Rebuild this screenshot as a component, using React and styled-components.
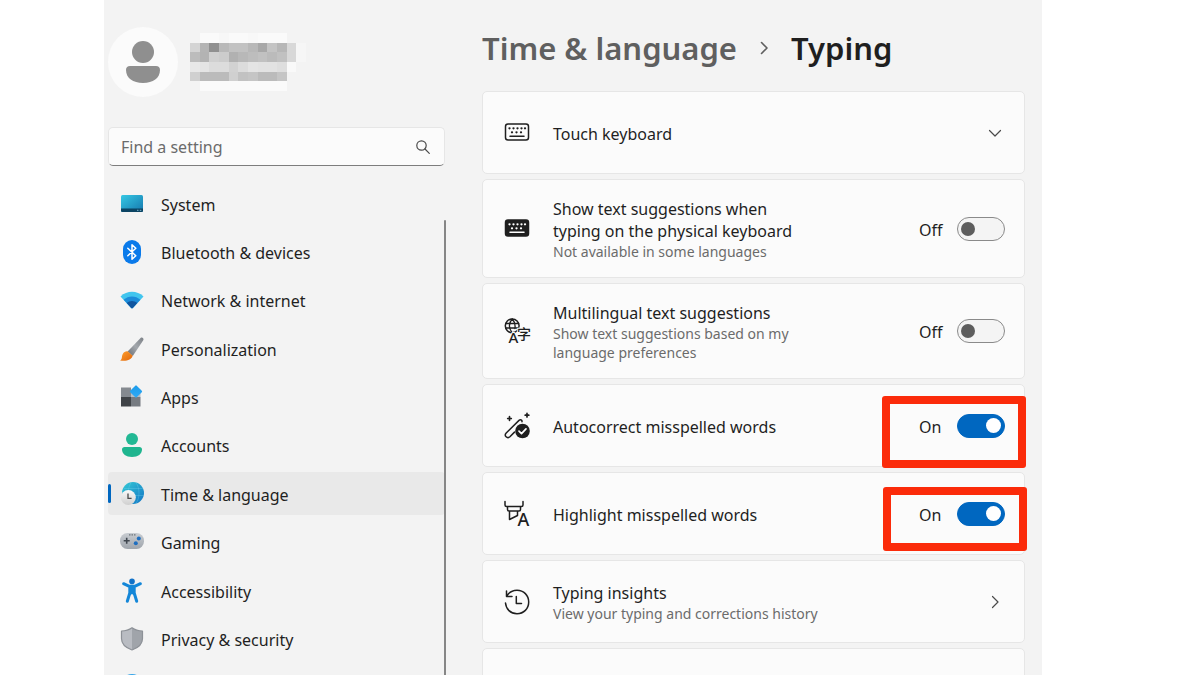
import React, { useState } from 'react';
import styled, { createGlobalStyle, css } from 'styled-components';

const colors = {
  window: '#f3f3f3',
  card: '#fbfbfb',
  line: '#e6e6e6',
  text: '#1f1f1f',
  muted: '#6b6b6b',
  accent: '#0067c0',
  mark: '#fb2b0a',
};

const GlobalStyle = createGlobalStyle`
  *, *::before, *::after {
    box-sizing: border-box;
  }
  body {
    margin: 0;
    background: #ffffff;
    color: ${colors.text};
    font-family: "Noto Sans", "Open Sans", "Noto Sans CJK SC", sans-serif;
    font-size: 16px;
    line-height: 22px;
  }
`;

const Window = styled.div`
  display: grid;
  grid-template-columns: 337px minmax(0, 1fr);
  column-gap: 37px;
  height: 100vh;
  margin: 0 158px 0 104px;
  padding: 0 17px 0 4px;
  overflow: hidden;
  background: ${colors.window};
`;

const Sidebar = styled.aside`
  padding-top: 27px;
`;

const Profile = styled.div`
  display: flex;
  align-items: center;
  gap: 12px;
  height: 70px;
`;

const Avatar = styled.div`
  display: flex;
  align-items: center;
  justify-content: center;
  width: 70px;
  height: 70px;
  border-radius: 50%;
  background: ${colors.card};
`;

const Search = styled.label`
  display: flex;
  align-items: center;
  height: 39px;
  margin: 30px 0 16px;
  padding: 0 13px 0 12px;
  border: 1px solid ${colors.line};
  border-bottom-color: #7d7d7d;
  border-radius: 5px;
  background: ${colors.card};
`;

const SearchInput = styled.input`
  flex: 1;
  min-width: 0;
  padding: 0;
  border: 0;
  outline: 0;
  background: transparent;
  color: ${colors.text};
  font: inherit;
  &::placeholder {
    color: ${colors.muted};
    opacity: 1;
  }
`;

const Nav = styled.nav`
  position: relative;
  display: flex;
  flex-direction: column;
  justify-content: space-between;
  height: calc(100vh - 148px);
`;

const NavItem = styled.a`
  display: flex;
  align-items: center;
  gap: 17px;
  height: 43px;
  padding-left: 12px;
  border-radius: 4px;
  color: ${colors.text};
  text-decoration: none;
  svg {
    flex: none;
    overflow: visible;
  }
  ${(props) => props.$active && css`
    padding-left: 0;
    background: #e9e9e9;
    &::before {
      content: "";
      width: 3px;
      height: 19px;
      margin-right: -8px;
      border-radius: 2px;
      background: ${colors.accent};
    }
  `}
`;

const NavText = styled.span`
  padding-top: 2px;
`;

const ScrollThumb = styled.div`
  position: absolute;
  top: 38px;
  right: -1px;
  bottom: 0;
  width: 2px;
  border-radius: 1px;
  background: #868686;
`;

const Main = styled.main`
  padding-top: 26px;
`;

const Breadcrumb = styled.header`
  display: flex;
  align-items: center;
  gap: 20px;
  height: 44px;
  margin-bottom: 21px;
  font-size: 31px;
  line-height: 44px;
  font-weight: 600;
`;

const Parent = styled.a`
  color: #5f5f5f;
  text-decoration: none;
`;

const Title = styled.h1`
  margin: 0;
  font: inherit;
`;

const Cards = styled.div`
  display: flex;
  flex-direction: column;
  gap: 5px;
`;

const Card = styled.section`
  position: relative;
  display: flex;
  align-items: center;
  gap: 23px;
  width: 100%;
  min-height: 83px;
  padding: 16px 19px 16px 21px;
  border: 1px solid ${colors.line};
  border-radius: 5px;
  background: ${colors.card};
  color: ${colors.text};
  font: inherit;
  text-align: left;
  text-decoration: none;
  svg {
    flex: none;
    overflow: visible;
  }
`;

const Texts = styled.div`
  flex: 1;
  min-width: 0;
  padding-top: 2px;
`;

const Label = styled.label`
  display: block;
  max-width: 260px;
`;

const Hint = styled.div`
  max-width: 270px;
  color: ${colors.muted};
  font-size: 14px;
  line-height: 19px;
`;

const State = styled.span`
  width: 38px;
  margin-right: -23px;
  padding-top: 2px;
`;

const Switch = styled.input`
  appearance: none;
  display: flex;
  align-items: center;
  width: 48px;
  height: 24px;
  margin: 0;
  padding: 0 3px;
  border: 1px solid #8a8a8a;
  border-radius: 12px;
  background: #f4f4f4;
  &::before {
    content: "";
    width: 14px;
    height: 14px;
    border-radius: 50%;
    background: #5d5d5d;
  }
  &:checked {
    justify-content: flex-end;
    border-color: ${colors.accent};
    background: ${colors.accent};
  }
  &:checked::before {
    width: 15px;
    height: 15px;
    background: #ffffff;
  }
`;

const Mark = styled.div`
  position: absolute;
  top: ${(props) => props.$top}px;
  right: ${(props) => props.$right}px;
  width: 144px;
  height: ${(props) => props.$height}px;
  border: 8px solid ${colors.mark};
  border-radius: 3px;
  pointer-events: none;
`;

const ChevronSlot = styled.span`
  display: flex;
  justify-content: center;
  width: 20px;
`;

// grey levels of the mosaic over the account name, one row per line
const mosaic = [
  ['', 'fa', 'fa', 'f7', 'fa', 'fa', 'f8', 'fa', 'fa', 'fa', ''],
  ['d4', 'b4', '90', 'b9', 'c2', 'c2', 'b8', 'a8', 'c4', 'b7', 'd8'],
  ['bc', 'b3', 'd0', 'cc', 'b1', 'b8', 'bd', 'c1', 'bb', 'c1', 'd8'],
  ['e8', 'e4', 'dc', 'dc', 'd2', 'dc', 'e4', 'e2', 'e2', 'de', 'f9'],
  ['d0', 'bb', 'bb', 'bb', 'd0', 'c2', 'c5', 'bb', 'bb', 'c5', ''],
  ['', 'fa', 'fa', 'fa', 'fa', 'fa', 'fa', 'fa', 'fa', 'fa', ''],
];

const HiddenName = () => (
  <svg width="116" height="58" viewBox="0 0 12 6" preserveAspectRatio="none" shapeRendering="crispEdges" aria-hidden="true">
    {mosaic.map((row, y) => row.map((v, x) => v && (
      <rect key={`${x}-${y}`} x={x} y={y} width="1" height="1" fill={`#${v}${v}${v}`} />
    )))}
    <rect x="11" y="1" width="1" height="2" fill="#f6f6f6" />
  </svg>
);

const PersonIcon = () => (
  <svg width="36" height="44" viewBox="0 0 36 44" fill="#8f8f8f" aria-hidden="true">
    <circle cx="18" cy="12" r="11" />
    <path d="M5 26h26c2.500 0 4 1.500 4 4 0 8-7 13-17 13S1 38 1 30c0-2.500 1.500-4 4-4z" />
  </svg>
);

const SearchIcon = () => (
  <svg width="16" height="16" viewBox="0 0 16 16" fill="none" stroke="#4a4a4a" strokeWidth="1.200" strokeLinecap="round" aria-hidden="true">
    <circle cx="6.500" cy="6.500" r="4.700" />
    <path d="M10 10l4.300 4.300" />
  </svg>
);

const Chevron = ({ down, color = '#4a4a4a', weight = 1.2 }) => (
  <svg width="14" height="14" viewBox="0 0 14 14" fill="none" stroke={color} strokeWidth={weight} strokeLinecap="round" strokeLinejoin="round" aria-hidden="true">
    <path d={down ? 'M1.500 4.500l5.500 5.500 5.500-5.500' : 'M4.500 1.500l5.500 5.500-5.500 5.500'} />
  </svg>
);

const NavSvg = ({ children }) => (
  <svg width="24" height="24" viewBox="0 0 24 24" fill="none" aria-hidden="true">{children}</svg>
);

const SystemIcon = () => (
  <NavSvg>
    <defs>
      <linearGradient id="sys" x1="0" y1="0" x2="1" y2="1">
        <stop offset="0" stopColor="#35c8e4" />
        <stop offset="1" stopColor="#1577ad" />
      </linearGradient>
    </defs>
    <rect x="1" y="3" width="22" height="17" rx="1.500" fill="url(#sys)" />
    <path d="M1 16.500h22v2a1.500 1.500 0 0 1-1.500 1.500h-19A1.500 1.500 0 0 1 1 18.500z" fill="#0b4463" />
    <path d="M17 18.300h1.500M19.800 18.300h1.500" stroke="#7fb6cf" />
  </NavSvg>
);

const BluetoothIcon = () => (
  <NavSvg>
    <rect x="3" y="0" width="18" height="24" rx="9" fill="#0a7aea" />
    <path d="M7.800 8.300l8 7.400-3.800 3.600V4.700l3.800 3.600-8 7.400" stroke="#fff" strokeWidth="1.500" strokeLinejoin="round" strokeLinecap="round" />
  </NavSvg>
);

const NetworkIcon = () => (
  <NavSvg>
    <path d="M0.500 8.500C7 2.300 17 2.300 23.500 8.500L13 19.700q-1 1-2 0z" fill="#41c5ee" />
    <path d="M3.600 11.800C8.400 7.300 15.600 7.300 20.400 11.800L13 19.700q-1 1-2 0z" fill="#1c8bd9" />
    <path d="M6.700 15.100c3-2.800 7.600-2.800 10.600 0L13 19.700q-1 1-2 0z" fill="#0f559f" />
  </NavSvg>
);

const BrushIcon = () => (
  <NavSvg>
    <defs>
      <linearGradient id="handle" x1="1" y1="0" x2="0" y2="1">
        <stop offset="0" stopColor="#7c8187" />
        <stop offset="0.500" stopColor="#a4a8ad" />
        <stop offset="1" stopColor="#666b72" />
      </linearGradient>
      <linearGradient id="bristle" x1="0" y1="0" x2="1" y2="1">
        <stop offset="0" stopColor="#ffa02e" />
        <stop offset="1" stopColor="#e0660c" />
      </linearGradient>
    </defs>
    <path d="M20.800 0.800c1.200-.9 3.200.4 2.600 2.100L12.800 19 7.600 14.500z" fill="url(#handle)" />
    <path d="M7.600 14.300l5 4.500c-1 4.400-6.400 5.600-12.600 4.700 2.800-1.600 1.200-3.600 2.800-6.600 1-1.900 3-2.900 4.800-2.600z" fill="url(#bristle)" />
  </NavSvg>
);

const AppsIcon = () => (
  <NavSvg>
    <defs>
      <linearGradient id="tile" x1="0" y1="0" x2="1" y2="1">
        <stop offset="0" stopColor="#1c9bea" />
        <stop offset="1" stopColor="#2faaf5" />
      </linearGradient>
    </defs>
    <rect x="1" y="2.500" width="10" height="9.500" fill="#858a90" />
    <rect x="1" y="12" width="10" height="9.500" fill="#3f4347" />
    <rect x="11" y="12" width="9.500" height="9.500" fill="#767b81" />
    <path d="M11 8h9.500v4H11z" fill="#b9bec4" />
    <rect x="11.400" y="1.900" width="9.200" height="9.200" rx="1" transform="rotate(45 16 6.500)" fill="url(#tile)" />
  </NavSvg>
);

const AccountsIcon = () => (
  <NavSvg>
    <circle cx="12" cy="6" r="6" fill="#22b894" />
    <path d="M4.500 14h15c1.500 0 2.500 1 2.500 2.500 0 4.500-4 7.500-10 7.500S2 21 2 16.500C2 15 3 14 4.500 14z" fill="#1fb58f" />
  </NavSvg>
);

const TimeIcon = () => (
  <NavSvg>
    <defs>
      <linearGradient id="globe" x1="0" y1="0" x2="1" y2="1">
        <stop offset="0" stopColor="#35cbd6" />
        <stop offset="1" stopColor="#1273c4" />
      </linearGradient>
      <linearGradient id="clock" x1="0" y1="0" x2="0" y2="1">
        <stop offset="0" stopColor="#fafafa" />
        <stop offset="1" stopColor="#cfcfcf" />
      </linearGradient>
    </defs>
    <circle cx="13" cy="11" r="11" fill="url(#globe)" />
    <path d="M4 6.500h19M8 13.500h16M16 0.500c4 6 4 15 0 21M11 0.500C9 4 8.500 7 8.500 9" stroke="#7fdcf0" strokeWidth="0.700" opacity="0.400" />
    <circle cx="8.300" cy="15.500" r="7.500" fill="url(#clock)" />
    <path d="M8 11.500v4.800h3.600" stroke="#4a4a4a" strokeWidth="1.300" />
  </NavSvg>
);

const GamingIcon = () => (
  <NavSvg>
    <defs>
      <linearGradient id="pad" x1="0" y1="0" x2="0" y2="1">
        <stop offset="0" stopColor="#c8ccd1" />
        <stop offset="1" stopColor="#9fa5ac" />
      </linearGradient>
    </defs>
    <rect x="0" y="3" width="24" height="16" rx="7.500" fill="url(#pad)" />
    <path d="M6.700 7.700v6M3.700 10.700h6" stroke="#3f464e" strokeWidth="1.600" />
    <path d="M9 4.800h1.500M11.500 4.800H13M14 4.800h1.500" stroke="#6d747b" strokeWidth="1.200" />
    <circle cx="18.800" cy="8.600" r="2" fill="#1f6fc0" />
    <circle cx="15.800" cy="13.200" r="2" fill="#1f6fc0" />
  </NavSvg>
);

const AccessibilityIcon = () => (
  <NavSvg>
    <circle cx="12" cy="2.400" r="2.800" fill="#1172c8" />
    <path d="M3.600 4.700L8.800 7.200h6.400l5.200-2.500M9.800 7.500V14L7.300 22.300M14.200 7.500V14l2.500 8.300" stroke="#1487d8" strokeWidth="3" strokeLinecap="round" strokeLinejoin="round" />
    <path d="M9 6.500h6v10.500L12 15l-3 2z" fill="#1487d8" />
  </NavSvg>
);

const ShieldIcon = () => (
  <NavSvg>
    <path d="M12 0.800C9 3 5 4 1.500 4v7.500C1.500 17 5 20.500 12 23z" fill="#b9bcc2" />
    <path d="M12 0.800c3 2.200 7 3.200 10.500 3.200v7.500C22.500 17 19 20.500 12 23z" fill="#a0a4aa" />
    <path d="M12 0.800c3 2.200 7 3.200 10.500 3.200v7.500C22.500 17 19 20.500 12 23 5 20.500 1.500 17 1.500 11.500V4C5 4 9 3 12 0.800z" stroke="#8d9197" strokeWidth="1.200" strokeLinejoin="round" />
  </NavSvg>
);

const UpdateIcon = () => (
  <NavSvg>
    <circle cx="12" cy="10.500" r="11.500" fill="#35a4e8" />
  </NavSvg>
);

const CardSvg = ({ children }) => (
  <svg width="26" height="26" viewBox="0 0 26 26" fill="none" stroke={colors.text} strokeWidth="1.500" strokeLinecap="round" strokeLinejoin="round" aria-hidden="true">{children}</svg>
);

const KeyboardIcon = ({ filled }) => (
  <CardSvg>
    <rect x="1.500" y="4" width="23" height="16" rx="2.500" fill={filled ? colors.text : 'none'} />
    <path
      d="M5.500 8.300h.01M9.500 8.300h.01M13.500 8.300h.01M17.500 8.300h.01M21 8.300h.01M8 12.300h.01M12.500 12.300h.01M17 12.300h.01"
      stroke={filled ? '#fff' : colors.text}
      strokeWidth="2.300"
    />
    <path d="M6 16.300h14" stroke={filled ? '#fff' : colors.text} />
  </CardSvg>
);

const MultilingualIcon = () => (
  <CardSvg>
    <circle cx="8.200" cy="7.800" r="6.900" />
    <path d="M1.800 5.500h12.800M1.800 10h12.500M8.200 1C4.500 5 4.500 10.500 8 14.600M8.200 1c2.500 2.600 3.300 6 2.700 9.500" strokeWidth="1.300" />
    <text x="13" y="21" fontSize="14" fontWeight="500" fill={colors.text} stroke={colors.card} strokeWidth="2" paintOrder="stroke" fontFamily="Noto Sans CJK SC">字</text>
    <text x="4.500" y="25" fontSize="15" fontWeight="500" fill={colors.text} stroke={colors.card} strokeWidth="2" paintOrder="stroke">A</text>
  </CardSvg>
);

const AutocorrectIcon = () => (
  <CardSvg>
    <path d="M18 8.700c.3-1.500-1.600-2.500-3-1.300L2.200 20c-2.500 2.700 1 6.200 3.700 3.700l4.600-4.600" />
    <circle cx="18.500" cy="18" r="7.300" fill={colors.text} stroke="none" />
    <path d="M15 18.200l2.500 2.400 4.500-4.800" stroke="#fff" strokeWidth="1.700" />
    <path d="M5.500 3.700v3.600M3.700 5.500h3.600M23 0.400v3.600M21.200 2.200h3.600" strokeWidth="1.700" />
  </CardSvg>
);

const HighlightIcon = () => (
  <CardSvg>
    <path d="M1 .5v3.500c0 1 .5 1.500 1.500 1.500h15c1 0 1.500-.5 1.500-1.500V.5M3.500 5.500v3c0 1 .7 1.500 1.500 1.500h10c1 0 1.500-.6 1.500-1.500v-3M5.500 10v8.500l8-4V10" />
    <text x="13.500" y="25" fontSize="18" fontWeight="500" fill={colors.text} stroke="none">A</text>
  </CardSvg>
);

const HistoryIcon = () => (
  <CardSvg>
    <path d="M1.500 14C2 20 6.500 24.700 13 24.700c6.700 0 11.700-5 11.700-11.700S19.700 1.300 13 1.300C8.500 1.300 5 3.500 2.800 7M2.500 2v5.500H8M12.300 7.500v7h5.200" />
  </CardSvg>
);

const navItems = [
  { name: 'System', icon: SystemIcon },
  { name: 'Bluetooth & devices', icon: BluetoothIcon },
  { name: 'Network & internet', icon: NetworkIcon },
  { name: 'Personalization', icon: BrushIcon },
  { name: 'Apps', icon: AppsIcon },
  { name: 'Accounts', icon: AccountsIcon },
  { name: 'Time & language', icon: TimeIcon, active: true },
  { name: 'Gaming', icon: GamingIcon },
  { name: 'Accessibility', icon: AccessibilityIcon },
  { name: 'Privacy & security', icon: ShieldIcon },
];

const ToggleCard = ({ id, icon, title, hint, initial = false, children }) => {
  const [on, setOn] = useState(initial);
  return (
    <Card>
      {icon}
      <Texts>
        <Label htmlFor={id}>{title}</Label>
        {hint && <Hint>{hint}</Hint>}
      </Texts>
      <State>{on ? 'On' : 'Off'}</State>
      <Switch id={id} type="checkbox" role="switch" checked={on} onChange={() => setOn(!on)} />
      {children}
    </Card>
  );
};

const App = () => (
  <>
    <GlobalStyle />
    <Window>
      <Sidebar>
        <Profile>
          <Avatar><PersonIcon /></Avatar>
          <HiddenName />
        </Profile>
        <Search>
          <SearchInput type="text" placeholder="Find a setting" aria-label="Find a setting" />
          <SearchIcon />
        </Search>
        <Nav>
          {navItems.map(({ name, icon: Icon, active }) => (
            <NavItem key={name} href="#" $active={active}>
              <Icon />
              <NavText>{name}</NavText>
            </NavItem>
          ))}
          <NavItem href="#"><UpdateIcon /></NavItem>
          <ScrollThumb />
        </Nav>
      </Sidebar>
      <Main>
        <Breadcrumb>
          <Parent href="#">Time &amp; language</Parent>
          <Chevron color="#5f5f5f" weight={1.6} />
          <Title>Typing</Title>
        </Breadcrumb>
        <Cards>
          <Card as="button" type="button">
            <KeyboardIcon />
            <Texts>Touch keyboard</Texts>
            <ChevronSlot><Chevron down /></ChevronSlot>
          </Card>
          <ToggleCard
            id="physical"
            icon={<KeyboardIcon filled />}
            title="Show text suggestions when typing on the physical keyboard"
            hint="Not available in some languages"
          />
          <ToggleCard
            id="multilingual"
            icon={<MultilingualIcon />}
            title="Multilingual text suggestions"
            hint="Show text suggestions based on my language preferences"
          />
          <ToggleCard id="autocorrect" icon={<AutocorrectIcon />} title="Autocorrect misspelled words" initial>
            <Mark $top={11} $right={-2} $height={72} />
          </ToggleCard>
          <ToggleCard id="highlight" icon={<HighlightIcon />} title="Highlight misspelled words" initial>
            <Mark $top={14} $right={-3} $height={64} />
          </ToggleCard>
          <Card as="a" href="#">
            <HistoryIcon />
            <Texts>
              <div>Typing insights</div>
              <Hint>View your typing and corrections history</Hint>
            </Texts>
            <ChevronSlot><Chevron /></ChevronSlot>
          </Card>
          <Card />
        </Cards>
      </Main>
    </Window>
  </>
);

export default App;
